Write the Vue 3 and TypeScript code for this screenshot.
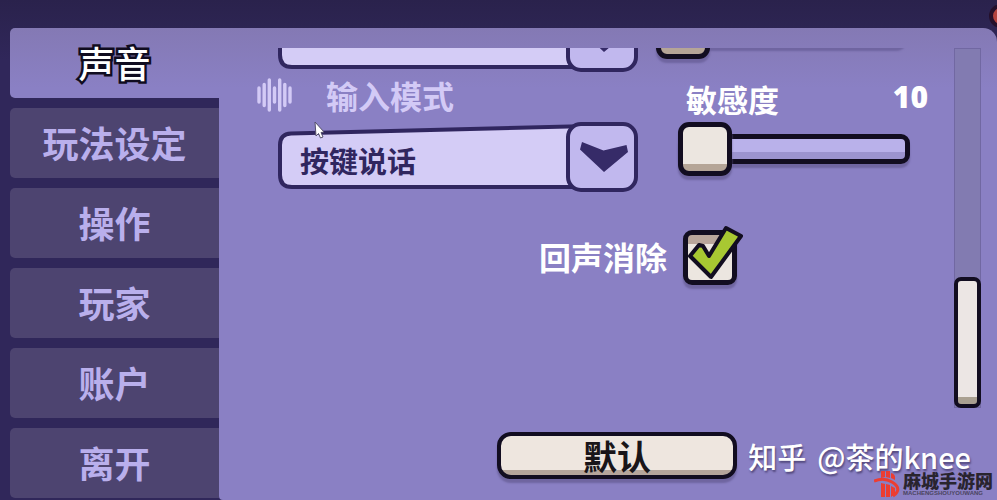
<script setup lang="ts">
import { ref } from 'vue'

const tabs: string[] = ['声音', '玩法设定', '操作', '玩家', '账户', '离开']
const activeTab = ref('声音')
const inputMode = ref('按键说话')
const device = ref('')
const volume = ref(0)
const sensitivity = ref(10)
const echoCancel = ref(true)
</script>

<template>
  <div class="screen">
    <nav class="tabs">
      <button
        v-for="tab in tabs"
        :key="tab"
        type="button"
        class="tab"
        :class="{ active: tab === activeTab }"
        @click="activeTab = tab"
      >{{ tab }}</button>
    </nav>

    <main class="panel">
      <div class="viewport">
        <div class="content">
          <div class="row previous">
            <div class="picker">
              <svg class="frame" viewBox="0 0 360 70" preserveAspectRatio="none" aria-hidden="true">
                <path d="M13 11.500L310 4V65H14Q2 65 2 53V23Q2 12 13 11.500Z" />
              </svg>
              <span class="drop">
                <svg viewBox="0 0 72 70" aria-hidden="true">
                  <path d="M16 20L37.500 28.500L60.500 23L62 30L38 50L14 27.500Z" />
                </svg>
              </span>
              <select v-model="device" aria-label="device"><option value=""></option></select>
            </div>
            <input v-model.number="volume" class="slider" type="range" min="0" max="100" aria-label="volume" />
          </div>

          <div class="row">
            <div class="field">
              <div class="heading">
                <svg class="wave" viewBox="0 0 36 36" aria-hidden="true">
                  <path d="M2 11V25M7.200 7.500V28.500M12.300 3V33M17.500 11V25M22.700 3V33M27.800 7.500V28.500M33 11V25" />
                </svg>
                <label for="mode">输入模式</label>
              </div>
              <div class="picker">
                <svg class="frame" viewBox="0 0 360 70" preserveAspectRatio="none" aria-hidden="true">
                  <path d="M13 11.500L310 4V65H14Q2 65 2 53V23Q2 12 13 11.500Z" />
                </svg>
                <span class="drop">
                  <svg viewBox="0 0 72 70" aria-hidden="true">
                    <path d="M16 20L37.500 28.500L60.500 23L62 30L38 50L14 27.500Z" />
                  </svg>
                </span>
                <select id="mode" v-model="inputMode"><option>按键说话</option></select>
                <svg class="pointer" viewBox="0 0 12 18" aria-hidden="true">
                  <path d="M1 1L10 11L7 11.500L9 16L6.500 17L4.500 12.500L2 15Z" />
                </svg>
              </div>
            </div>

            <div class="field">
              <div class="heading level">
                <label for="sensitivity">敏感度</label>
                <output for="sensitivity">{{ sensitivity }}</output>
              </div>
              <input id="sensitivity" v-model.number="sensitivity" class="slider" type="range" min="10" max="100" />
            </div>
          </div>

          <div class="row echo">
            <label for="echo">回声消除</label>
            <span class="check">
              <input id="echo" v-model="echoCancel" type="checkbox" />
              <svg v-if="echoCancel" viewBox="0 0 60 60" aria-hidden="true">
                <path d="M7 31L16 20L20 21L26 31L43 3L58 11L28 52Z" />
              </svg>
            </span>
          </div>
        </div>

        <div class="scrollbar"><div class="thumb"></div></div>
      </div>

      <footer class="footer">
        <button type="button" class="default">默认</button>
      </footer>
    </main>

    <svg class="corner" viewBox="0 0 8 24" aria-hidden="true">
      <circle cx="12" cy="11" r="10" />
    </svg>

    <div class="credit"><span>知乎</span><span>@茶的knee</span></div>

    <div class="site">
      <svg viewBox="0 0 26 28" aria-hidden="true">
        <path class="block" d="M7 1H11V7L7 8ZM12 1H16V8L12 7ZM17 3Q22 4 21 10L17 8Z" />
        <path class="block" d="M7 13L11 14V27H7ZM12 14L16 15V27H12ZM17 16L21 18V24L17 27Z" />
        <path class="swoosh" d="M0 11Q10 7 18 12Q26 17 23 22Q22 24 19 26" />
      </svg>
      <div class="names">
        <strong>麻城手游网</strong>
        <small>MACHENGSHOUYOUWANG</small>
      </div>
    </div>
  </div>
</template>

<style>
body {
  background: #30275a;
}
</style>

<style scoped>
.screen {
  position: relative;
  box-sizing: border-box;
  display: flex;
  min-height: 100vh;
  padding: 28px 0 0 10px;
  overflow: hidden;
  background: linear-gradient(#2a224c, #30275a 60px);
  font-family: "Noto Sans CJK SC", sans-serif;
  color: #fff;
}

.screen *,
.screen *::before {
  box-sizing: border-box;
}

button,
select,
input {
  margin: 0;
  font-family: inherit;
}

.tabs {
  display: flex;
  flex: 0 0 209px;
  flex-direction: column;
  gap: 10px;
}

.tab {
  height: 70px;
  padding: 0 0 2px;
  border: 0;
  border-radius: 5px 0 0 5px;
  background: #4d4470;
  color: #b9afec;
  font-size: 36px;
  font-weight: 700;
  line-height: 68px;
}

.tab.active {
  background: linear-gradient(#8479b4, #8a80c4 60px);
  color: #fff;
  font-weight: 500;
  -webkit-text-stroke: 5px #100c20;
  paint-order: stroke fill;
}

.panel {
  display: flex;
  flex: 1;
  flex-direction: column;
  min-width: 0;
  padding: 20px 16px 20px 0;
  border-radius: 0 14px 0 4px;
  background: linear-gradient(#8479b4, #8a80c4 60px);
}

.viewport {
  display: flex;
}

.content {
  flex: 1;
  min-width: 0;
  padding: 0 26px 0 38px;
}

.row {
  display: grid;
  grid-template-columns: minmax(0, 1fr) 250px;
  column-gap: 40px;
}

.previous {
  grid-template-rows: 24px;
  height: 24px;
  overflow: hidden;
  align-items: end;
}

.previous .slider {
  width: 250px;
  margin: 0 0 13px -22px;
}

.heading {
  display: flex;
  align-items: center;
  height: 50px;
  padding-bottom: 4px;
  color: #d3caf6;
  font-size: 32px;
  font-weight: 700;
  line-height: 46px;
}

.wave {
  width: 36px;
  height: 36px;
  margin-right: 33px;
  fill: none;
  stroke: #d3caf6;
  stroke-width: 3.4;
  stroke-linecap: round;
}

.level {
  justify-content: space-between;
  padding: 4px 0 0 8px;
  color: #fff;
  font-size: 31px;
}

.level output {
  padding-bottom: 4px;
  font-family: "Open Sans", sans-serif;
  font-size: 30px;
  font-weight: 800;
  line-height: 36px;
}

.picker {
  position: relative;
  display: flex;
  justify-content: flex-end;
  height: 70px;
  margin-left: 21px;
}

.frame {
  position: absolute;
  inset: 0;
  width: 100%;
  height: 100%;
}

.frame path {
  fill: #d4ccf6;
  stroke: #30265f;
  stroke-width: 4;
  vector-effect: non-scaling-stroke;
}

.drop {
  position: relative;
  width: 72px;
  height: 70px;
  border: 4px solid #30265f;
  border-radius: 15px;
  background: #c1b8ee;
}

.drop svg {
  display: block;
  width: 72px;
  height: 70px;
  margin: -4px;
  fill: #362b68;
}

.picker select {
  position: absolute;
  inset: 0;
  width: 100%;
  padding: 6px 80px 0 22px;
  border: 0;
  appearance: none;
  background: transparent;
  color: #30265f;
  font-size: 29px;
  font-weight: 700;
}

.pointer {
  position: absolute;
  top: -1px;
  left: 36px;
  width: 12px;
  height: 18px;
  fill: #fff;
  stroke: #55506c;
  stroke-width: 1;
}

.slider {
  display: block;
  width: 232px;
  height: 54px;
  appearance: none;
  background: transparent;
}

.slider::-webkit-slider-runnable-track {
  height: 30px;
  border: 5px solid #120d20;
  border-radius: 9px;
  background: linear-gradient(#b9b1ea 65%, #9c94cf 65%);
  box-shadow: 0 4px 2px #6f65a0;
}

.slider::-webkit-slider-thumb {
  width: 54px;
  height: 54px;
  margin: -17px 0 0 -5px;
  border: 5px solid #120d20;
  border-radius: 11px;
  appearance: none;
  background: linear-gradient(#ece6e0 37px, #b5a597 37px);
  box-shadow: 0 4px 2px #6f65a0;
}

.echo {
  display: flex;
  align-items: center;
  gap: 16px;
  margin-top: 36px;
  padding-left: 282px;
  font-size: 32px;
  font-weight: 700;
  line-height: 56px;
}

.echo label {
  padding-bottom: 2px;
}

.check {
  position: relative;
  display: flex;
}

.check input {
  width: 54px;
  height: 55px;
  border: 5px solid #120d20;
  border-radius: 9px;
  appearance: none;
  background: linear-gradient(#b9a69b 9px, #ece6e0 9px);
  box-shadow: 0 4px 2px #6f65a0;
}

.check svg {
  position: absolute;
  top: -5px;
  left: 0;
  width: 60px;
  height: 60px;
  pointer-events: none;
  fill: #a8c832;
  stroke: #120d20;
  stroke-width: 4;
  stroke-linejoin: round;
}

.scrollbar {
  display: flex;
  flex: 0 0 27px;
  flex-direction: column;
  justify-content: flex-end;
  height: 360px;
  border: 1px solid #7168a2;
  background: #827bb1;
}

.thumb {
  height: 131px;
  margin: 0 -1px -1px;
  border: 4px solid #120d20;
  border-radius: 7px;
  background: linear-gradient(#ece6e4 116px, #aaa091 116px);
}

.footer {
  display: flex;
  justify-content: center;
  padding: 24px 0 0 34px;
}

.default {
  width: 240px;
  height: 47px;
  padding: 0;
  border: 4px solid #120d20;
  border-radius: 14px;
  background: linear-gradient(#eee6df 34px, #b5a59b 34px);
  box-shadow: 0 4px 2px #6f65a0;
  color: #191519;
  font-size: 34px;
  font-weight: 700;
  line-height: 38px;
}

.corner {
  position: absolute;
  top: 5px;
  right: 0;
  width: 8px;
  height: 24px;
  fill: #b2433f;
  stroke: #24102b;
  stroke-width: 4;
}

.credit {
  position: absolute;
  right: 26px;
  bottom: 29px;
  display: flex;
  gap: 11px;
  font-size: 29px;
  font-weight: 500;
  line-height: 30px;
  text-shadow: 1px 2px 2px #51477c;
}

.site {
  position: absolute;
  right: 4px;
  bottom: 2px;
  display: flex;
  align-items: center;
  gap: 3px;
  color: #29242f;
}

.site svg {
  width: 26px;
  height: 28px;
}

.site .block {
  fill: #ec3d32;
}

.site .swoosh {
  fill: none;
  stroke: #ec3d32;
  stroke-width: 3;
}

.names {
  display: flex;
  flex-direction: column;
}

.names strong {
  font-size: 18px;
  font-weight: 900;
  line-height: 19px;
}

.names small {
  font-family: "Liberation Sans", sans-serif;
  font-size: 6px;
  font-weight: 700;
  line-height: 7px;
  color: #4b4460;
}
</style>
